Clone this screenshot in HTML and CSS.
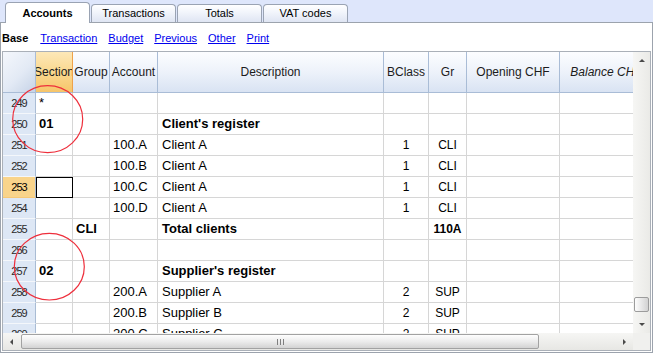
FILE: index.html
```html
<!DOCTYPE html>
<html lang="en">
  <head>
    <meta charset="UTF-8" />
    <title>Accounts</title>
    <link rel="stylesheet" href="styles.css">
  </head>
  <body>
    <div class="tabs">
      <div class="tab active">Accounts</div>
      <div class="tab">Transactions</div>
      <div class="tab">Totals</div>
      <div class="tab">VAT codes</div>
    </div>
    <div class="panel">
      <div class="toolbar">
        <b>Base</b>
        <a href="#">Transaction</a>
        <a href="#">Budget</a>
        <a href="#">Previous</a>
        <a href="#">Other</a>
        <a href="#">Print</a>
      </div>
      <div class="grid">
        <div class="grid-view">
          <table class="sheet">
            <colgroup>
              <col class="w-num">
              <col class="w-section">
              <col class="w-group">
              <col class="w-account">
              <col class="w-desc">
              <col class="w-bclass">
              <col class="w-gr">
              <col class="w-amount">
              <col class="w-amount">
            </colgroup>
            <thead>
              <tr>
                <th class="corner"><div class="hd"></div></th>
                <th class="hot"><div class="hd">Section</div></th>
                <th><div class="hd">Group</div></th>
                <th><div class="hd">Account</div></th>
                <th><div class="hd">Description</div></th>
                <th><div class="hd">BClass</div></th>
                <th><div class="hd">Gr</div></th>
                <th><div class="hd">Opening CHF</div></th>
                <th><div class="hd italic">Balance CHF</div></th>
              </tr>
            </thead>
            <tbody>
              <tr><td class="num">249</td><td>*</td><td></td><td></td><td class="desc"></td><td class="c"></td><td class="c"></td><td></td><td></td></tr>
              <tr><td class="num">250</td><td><b>01</b></td><td></td><td></td><td class="desc"><b>Client's register</b></td><td class="c"></td><td class="c"></td><td></td><td></td></tr>
              <tr><td class="num">251</td><td></td><td></td><td>100.A</td><td class="desc">Client A</td><td class="c">1</td><td class="c">CLI</td><td></td><td></td></tr>
              <tr><td class="num">252</td><td></td><td></td><td>100.B</td><td class="desc">Client A</td><td class="c">1</td><td class="c">CLI</td><td></td><td></td></tr>
              <tr><td class="num sel">253</td><td class="cur"></td><td></td><td>100.C</td><td class="desc">Client A</td><td class="c">1</td><td class="c">CLI</td><td></td><td></td></tr>
              <tr><td class="num">254</td><td></td><td></td><td>100.D</td><td class="desc">Client A</td><td class="c">1</td><td class="c">CLI</td><td></td><td></td></tr>
              <tr><td class="num">255</td><td></td><td><b>CLI</b></td><td></td><td class="desc"><b>Total clients</b></td><td class="c"></td><td class="c"><b>110A</b></td><td></td><td></td></tr>
              <tr><td class="num">256</td><td></td><td></td><td></td><td class="desc"></td><td class="c"></td><td class="c"></td><td></td><td></td></tr>
              <tr><td class="num">257</td><td><b>02</b></td><td></td><td></td><td class="desc"><b>Supplier's register</b></td><td class="c"></td><td class="c"></td><td></td><td></td></tr>
              <tr><td class="num">258</td><td></td><td></td><td>200.A</td><td class="desc">Supplier A</td><td class="c">2</td><td class="c">SUP</td><td></td><td></td></tr>
              <tr><td class="num">259</td><td></td><td></td><td>200.B</td><td class="desc">Supplier B</td><td class="c">2</td><td class="c">SUP</td><td></td><td></td></tr>
              <tr><td class="num">260</td><td></td><td></td><td>200.C</td><td class="desc">Supplier C</td><td class="c">2</td><td class="c">SUP</td><td></td><td></td></tr>
            </tbody>
          </table>
        </div>

        <!-- vertical scrollbar -->
        <div class="vscroll">
          <div class="sb-btn"><span class="arrow-up"></span></div>
          <div class="vtrack"><div class="vthumb"></div></div>
          <div class="sb-btn"><span class="arrow-down"></span></div>
        </div>

        <!-- horizontal scrollbar -->
        <div class="hscroll">
          <div class="sb-btn"><span class="arrow-left"></span></div>
          <div class="hthumb"><span class="grip"></span></div>
          <div class="htrack"></div>
          <div class="sb-btn"><span class="arrow-right"></span></div>
        </div>
        <div class="sb-corner"></div>
      </div>
    </div>

    <svg class="marks" width="653" height="353" viewBox="0 0 653 353">
      <ellipse cx="47.7" cy="119.2" rx="35" ry="33.5" />
      <ellipse cx="49.3" cy="266.7" rx="35" ry="33.3" />
    </svg>
  </body>
</html>
```

FILE: styles.css
```css
* {
  box-sizing: border-box;
}

body {
  margin: 0;
  width: 653px;
  height: 353px;
  overflow: hidden;
  position: relative;
  background: #fff;
  font-family: "Liberation Sans", Arial, sans-serif;
  color: #000;
}

/* tabs */
.tabs {
  display: flex;
  align-items: flex-end;
  gap: 1px;
  height: 22px;
  padding-left: 5px;
  background: #dee6fb;
}

.tab {
  width: 85px;
  height: 18px;
  border: 1px solid #9aa3b3;
  border-bottom: none;
  border-radius: 4px 4px 0 0;
  background: linear-gradient(#ffffff, #f1f4fb 45%, #dfe5f3);
  font-size: 11px;
  line-height: 17px;
  text-align: center;
}

.tab.active {
  position: relative;
  z-index: 1;
  height: 21px;
  margin-bottom: -1px;
  background: #fff;
  font-weight: bold;
  line-height: 20px;
}

/* panel */
.panel {
  width: 653px;
  height: 331px;
  border: 1px solid #9ca3ad;
}

.toolbar {
  display: flex;
  align-items: center;
  gap: 11px;
  height: 28px;
  padding: 2px 0 0 1px;
  font-size: 11px;
}

.toolbar b {
  margin-right: 1px;
}

.toolbar a {
  color: #0000ee;
}

/* grid */
.grid {
  display: grid;
  grid-template-columns: 630px 17px;
  grid-template-rows: 281px 17px;
  width: 649px;
  height: 300px;
  margin-left: 1px;
  border: 1px solid #aab0b8;
}

.grid-view {
  overflow: hidden;
}

.sheet {
  border-collapse: separate;
  border-spacing: 0;
  table-layout: fixed;
  width: 650px;
  font-size: 13px;
}

.w-num { width: 33px; }
.w-section { width: 37px; }
.w-group { width: 37px; }
.w-account { width: 48px; }
.w-desc { width: 226px; }
.w-bclass { width: 45px; }
.w-gr { width: 38px; }
.w-amount { width: 93px; }

.sheet th {
  padding: 0;
  font-weight: normal;
  border-right: 1px solid #a9bcd6;
  border-bottom: 1px solid #a9bcd6;
  background: linear-gradient(#fcfdff, #edf2fa 50%, #d9e3f3);
}

.sheet th.hot {
  border-right-color: #eea24a;
  background: linear-gradient(#fde8b8, #fad88f 50%, #f6c56a);
}

.sheet th.corner {
  background: linear-gradient(135deg, #f4f7fc 0%, #e3eaf5 55%, #c6d3e7 100%);
}

.hd {
  display: flex;
  align-items: center;
  justify-content: center;
  height: 40px;
  overflow: hidden;
  white-space: nowrap;
  font-size: 12px;
  color: #1c1c1c;
}

.hd.italic {
  font-style: italic;
}

.sheet td {
  padding: 0 3px;
  line-height: 20px;
  white-space: nowrap;
  overflow: hidden;
  border-right: 1px solid #d6d6d6;
  border-bottom: 1px solid #d6d6d6;
}

.sheet td.desc {
  padding-left: 4px;
}

.sheet td.c {
  text-align: center;
  font-size: 12px;
}

.sheet td.num {
  padding: 0;
  text-align: center;
  font-size: 11px;
  letter-spacing: -0.9px;
  color: #2a2a2a;
  background: #dde7f5;
  border-right-color: #a9bcd4;
  border-bottom-color: #f4f7fb;
}

.sheet td.num.sel {
  color: #000;
  background: #f9d48b;
  border-bottom-color: #f6c877;
}

.sheet td.cur {
  outline: 1px solid #000;
  outline-offset: -1px;
}

/* scrollbars */
.vscroll {
  display: flex;
  flex-direction: column;
  background: linear-gradient(to right, #f6f6f4, #eaeae7);
}

.sb-btn {
  display: flex;
  align-items: center;
  justify-content: center;
  flex: 0 0 17px;
  width: 17px;
  height: 17px;
}

.vtrack {
  flex: 1;
  display: flex;
  flex-direction: column;
  justify-content: flex-end;
  padding-bottom: 4px;
}

.vthumb {
  height: 15px;
  margin: 0 1px;
  border: 1px solid #9c9c9c;
  border-radius: 2px;
  background: linear-gradient(to right, #fdfdfd, #e8e8e8 50%, #d2d2d2);
}

.hscroll {
  display: flex;
  align-items: center;
  background: linear-gradient(#f6f6f4, #e7e7e4);
}

.hthumb {
  display: flex;
  align-items: center;
  justify-content: center;
  width: 518px;
  height: 15px;
  margin-left: 1px;
  border: 1px solid #a2a2a2;
  border-radius: 2px;
  background: linear-gradient(#fefefe, #ececec 50%, #d3d3d3);
}

.grip {
  width: 7px;
  height: 6px;
  background: repeating-linear-gradient(to right, #7f7f7f 0 1px, transparent 1px 3px);
}

.htrack {
  flex: 1;
}

.sb-corner {
  background: #f0f0ee;
}

.arrow-up,
.arrow-down,
.arrow-left,
.arrow-right {
  width: 0;
  height: 0;
}

.arrow-up {
  border-left: 3px solid transparent;
  border-right: 3px solid transparent;
  border-bottom: 3px solid #4a4a4a;
}

.arrow-down {
  border-left: 3px solid transparent;
  border-right: 3px solid transparent;
  border-top: 3px solid #4a4a4a;
}

.arrow-left {
  border-top: 3px solid transparent;
  border-bottom: 3px solid transparent;
  border-right: 3px solid #4a4a4a;
}

.arrow-right {
  border-top: 3px solid transparent;
  border-bottom: 3px solid transparent;
  border-left: 3px solid #4a4a4a;
}

/* red marks drawn over the grid */
.marks {
  position: absolute;
  top: 0;
  left: 0;
  pointer-events: none;
}

.marks ellipse {
  fill: none;
  stroke: #ee2f3c;
  stroke-width: 1.2;
}
```
